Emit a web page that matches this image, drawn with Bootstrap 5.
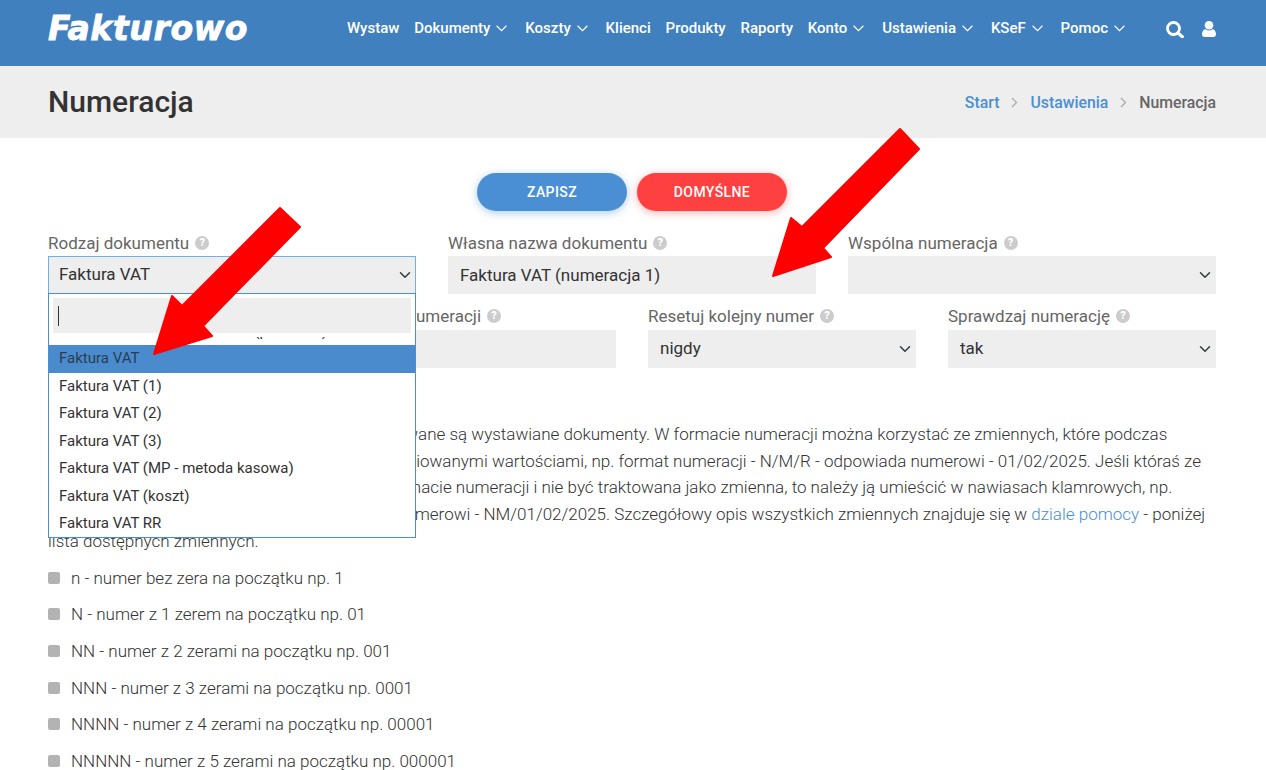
<!DOCTYPE html>
<html lang="pl">
<head>
<meta charset="utf-8">
<title>Numeracja</title>
<link rel="stylesheet" href="https://cdn.jsdelivr.net/npm/bootstrap@5.3.0/dist/css/bootstrap.min.css">
<style>
html,body{height:770px;overflow:hidden}
body{font-family:Roboto,"Liberation Sans",sans-serif;font-size:17px;color:#333;background:#fff;position:relative}
.top-nav{--bs-navbar-nav-link-padding-x:7.4px;background:#4080bf;height:66px;padding:0 50px 0 48px;align-items:flex-start;flex-wrap:nowrap}
.top-logo{font-family:"DejaVu Sans",sans-serif;font-weight:700;font-style:italic;font-size:33px;line-height:44px;color:#fff;letter-spacing:.65px;-webkit-text-stroke:.8px #fff;padding:7px 0 0;margin:0}
.top-logo:hover{color:#fff}
.top-menu{margin-top:17px;align-items:center}
.top-menu .nav-link{color:#fff;font-weight:500;font-size:15px;line-height:22px;padding-top:0;padding-bottom:0;display:flex;align-items:center;white-space:nowrap}
.top-menu .nav-link .chev{margin-left:6px;margin-right:3.1px}
.top-icons{margin-left:30.5px;gap:18px;margin-top:2px}
.band{background:#eee;height:72px;padding:0 50px 0 48px}
.band h1{font-size:30px;font-weight:500;margin:0;color:#333}
.crumbs{font-weight:500;font-size:15.8px;margin:0;padding-top:1px}
.crumbs a{color:#4a8fd4;text-decoration:none}
.crumbs .active{color:#666}
.crumb-sep{width:31px;display:flex;justify-content:center}
.page{padding:35px 50px 0 48px}
.btn-row{column-gap:10px}
.btn-pill{width:150px;height:38px;border-radius:19px;border:0;color:#fff;font-size:14px;font-weight:500;letter-spacing:.4px;line-height:38px;padding:0}
.btn-blue{background:#4a8fd4;box-shadow:0 2px 8px rgba(74,143,212,.45)}
.btn-red{background:#ff4040;box-shadow:0 2px 8px rgba(255,64,64,.4)}
.btn-blue:hover,.btn-red:hover{color:#fff}
.form-rows{--bs-gutter-x:32px;margin-top:21px}
.form-rows label{display:flex;align-items:center;gap:6px;color:#666;font-size:17px;line-height:22px;height:24px;padding-bottom:2px;margin:0;white-space:nowrap}
.hint{width:14px;height:14px;border-radius:50%;background:#ccc;color:#fff;font-size:11px;font-weight:900;line-height:14px;text-align:center;display:inline-block}
.fld{background-color:#eee;border:0;border-radius:0;height:38px;font-size:17px;color:#333;padding:0 12px;box-shadow:none}
.form-select.fld{background-position:right 3px center}
.fld:focus{background-color:#eee;box-shadow:none}
.row2{margin-top:12px;height:62px}
.row2 .fld{height:37.5px}
.form-rows.row2 label{padding-bottom:4px}
.form-select.fld-open{border:1px solid #6fb0e6;padding-left:10px;background-position:right 2px center}
.copy{font-weight:300;font-size:17px;line-height:26.67px;margin:53px 0 0;color:#333;white-space:nowrap}
.copy a{color:#4a8fd4;text-decoration:none}
.vars{list-style:none;padding:0;margin:5.3px 0 0;font-weight:300;font-size:17px}
.vars li{height:36.67px;line-height:36.67px;padding-left:23px;position:relative;white-space:nowrap}
.vars li::before{content:"";position:absolute;left:0;top:12px;width:12px;height:12px;background:#b3b3b3;border-radius:2px}
.drop{position:absolute;left:48px;top:293px;width:368px;height:245px;background:#fff;border:1px solid #4a8fd4;overflow:hidden;font-size:15px}
.drop-search{height:43px;padding:4px}
.search-box{background:#eee;height:35px;padding-left:5px;display:flex;align-items:center}
.caret-bar{width:1px;height:20px;background:#333}
.drop-list{height:201px;overflow:hidden;list-style:none;margin:0;padding:0}
.drop-list li{height:27.5px;line-height:26px;padding-left:10px;white-space:nowrap;color:#333}
.drop-list .clipped{margin-top:-19.5px}
.drop-list .hl{background:#4a8bcd;color:#2b3d50}
.arrows{position:absolute;left:0;top:0;pointer-events:none}
</style>
</head>
<body>
<nav class="navbar navbar-expand top-nav">
  <a class="navbar-brand top-logo" href="#">Fakturowo</a>
  <ul class="navbar-nav ms-auto top-menu">
    <li class="nav-item"><a class="nav-link" href="#">Wystaw</a></li>
    <li class="nav-item"><a class="nav-link" href="#">Dokumenty<svg class="chev" width="11" height="7" viewBox="0 0 11 7"><path d="M.6.8 5.500 5.600 10.400.8" fill="none" stroke="#fff" stroke-width="1.200"/></svg></a></li>
    <li class="nav-item"><a class="nav-link" href="#">Koszty<svg class="chev" width="11" height="7" viewBox="0 0 11 7"><path d="M.6.8 5.500 5.600 10.400.8" fill="none" stroke="#fff" stroke-width="1.200"/></svg></a></li>
    <li class="nav-item"><a class="nav-link" href="#">Klienci</a></li>
    <li class="nav-item"><a class="nav-link" href="#">Produkty</a></li>
    <li class="nav-item"><a class="nav-link" href="#">Raporty</a></li>
    <li class="nav-item"><a class="nav-link" href="#">Konto<svg class="chev" width="11" height="7" viewBox="0 0 11 7"><path d="M.6.8 5.500 5.600 10.400.8" fill="none" stroke="#fff" stroke-width="1.200"/></svg></a></li>
    <li class="nav-item"><a class="nav-link" href="#">Ustawienia<svg class="chev" width="11" height="7" viewBox="0 0 11 7"><path d="M.6.8 5.500 5.600 10.400.8" fill="none" stroke="#fff" stroke-width="1.200"/></svg></a></li>
    <li class="nav-item"><a class="nav-link" href="#">KSeF<svg class="chev" width="11" height="7" viewBox="0 0 11 7"><path d="M.6.8 5.500 5.600 10.400.8" fill="none" stroke="#fff" stroke-width="1.200"/></svg></a></li>
    <li class="nav-item"><a class="nav-link" href="#">Pomoc<svg class="chev" width="11" height="7" viewBox="0 0 11 7"><path d="M.6.8 5.500 5.600 10.400.8" fill="none" stroke="#fff" stroke-width="1.200"/></svg></a></li>
    <li class="nav-item d-flex align-items-center top-icons">
      <svg width="18" height="17" viewBox="0 0 18 17"><circle cx="7.500" cy="7.500" r="6" fill="none" stroke="#fff" stroke-width="2.800"/><path d="M12 12l4.300 3.700" stroke="#fff" stroke-width="3.200" stroke-linecap="round"/></svg>
      <svg width="14" height="16" viewBox="0 0 14 16"><circle cx="7" cy="4.300" r="4.300" fill="#fff"/><path d="M0 13.300C0 10 1.800 8.200 3.600 8.200c1 .8 2.100 1.200 3.400 1.200s2.400-.4 3.400-1.200C12.200 8.200 14 10 14 13.300 14 15 13 16 11.500 16h-9C1 16 0 15 0 13.300z" fill="#fff"/></svg>
    </li>
  </ul>
</nav>

<header class="band d-flex align-items-center justify-content-between">
  <h1>Numeracja</h1>
  <div class="d-flex align-items-center crumbs">
    <a href="#">Start</a>
    <span class="crumb-sep"><svg width="7" height="11" viewBox="0 0 7 11"><path d="M1 1l4.500 4.500L1 10" fill="none" stroke="#aaa" stroke-width="1.300"/></svg></span>
    <a href="#">Ustawienia</a>
    <span class="crumb-sep"><svg width="7" height="11" viewBox="0 0 7 11"><path d="M1 1l4.500 4.500L1 10" fill="none" stroke="#aaa" stroke-width="1.300"/></svg></span>
    <span class="active">Numeracja</span>
  </div>
</header>

<main class="page">
  <div class="d-flex justify-content-center btn-row">
    <button type="button" class="btn btn-pill btn-blue">ZAPISZ</button>
    <button type="button" class="btn btn-pill btn-red">DOMYŚLNE</button>
  </div>

  <div class="row form-rows">
    <div class="col-4">
      <label>Rodzaj dokumentu <span class="hint">?</span></label>
      <select class="form-select fld fld-open"><option>Faktura VAT</option></select>
    </div>
    <div class="col-4">
      <label>Własna nazwa dokumentu <span class="hint">?</span></label>
      <input class="form-control fld" value="Faktura VAT (numeracja 1)">
    </div>
    <div class="col-4">
      <label>Wspólna numeracja <span class="hint">?</span></label>
      <select class="form-select fld"><option></option></select>
    </div>
  </div>

  <div class="row form-rows row2">
    <div class="col-3">
      <label>Kolejny numer <span class="hint">?</span></label>
      <input class="form-control fld" value="1">
    </div>
    <div class="col-3">
      <label>Format numeracji <span class="hint">?</span></label>
      <input class="form-control fld" value="">
    </div>
    <div class="col-3">
      <label>Resetuj kolejny numer <span class="hint">?</span></label>
      <select class="form-select fld"><option>nigdy</option></select>
    </div>
    <div class="col-3">
      <label>Sprawdzaj numerację <span class="hint">?</span></label>
      <select class="form-select fld"><option>tak</option></select>
    </div>
  </div>

  <p class="copy">Format numeracji określa w jaki sposób numerowane są wystawiane dokumenty. W formacie numeracji można korzystać ze zmiennych, które podczas<br>
  wystawiania dokumentów zastępowane są zdefiniowanymi wartościami, np. format numeracji - N/M/R - odpowiada numerowi - 01/02/2025. Jeśli któraś ze<br>
  zmiennych ma być wyświetlona dosłownie w formacie numeracji i nie być traktowana jako zmienna, to należy ją umieścić w nawiasach klamrowych, np.<br>
  format numeracji - {N}{M}/N/M/R - odpowiada numerowi - NM/01/02/2025. Szczegółowy opis wszystkich zmiennych znajduje się w <a href="#">dziale pomocy</a> - poniżej<br>
  lista dostępnych zmiennych.</p>

  <ul class="vars">
    <li>n - numer bez zera na początku np. 1</li>
    <li>N - numer z 1 zerem na początku np. 01</li>
    <li>NN - numer z 2 zerami na początku np. 001</li>
    <li>NNN - numer z 3 zerami na początku np. 0001</li>
    <li>NNNN - numer z 4 zerami na początku np. 00001</li>
    <li>NNNNN - numer z 5 zerami na początku np. 000001</li>
  </ul>
</main>

<div class="drop">
  <div class="drop-search"><div class="search-box"><span class="caret-bar"></span></div></div>
  <ul class="drop-list">
    <li class="clipped">Faktura końcowa, rozliczenie (proforma)</li>
    <li class="hl">Faktura VAT</li>
    <li>Faktura VAT (1)</li>
    <li>Faktura VAT (2)</li>
    <li>Faktura VAT (3)</li>
    <li>Faktura VAT (MP - metoda kasowa)</li>
    <li>Faktura VAT (koszt)</li>
    <li>Faktura VAT RR</li>
  </ul>
</div>

<svg class="arrows" width="1266" height="770" viewBox="0 0 1266 770">
  <g fill="#f00" stroke="#f00" stroke-width="2" stroke-linejoin="round">
    <polygon points="154,354 172,296 182,306 280,208 300,227 203,326 212,336"/>
    <polygon points="773,276 791,218 802,227 900,129 919,149 823,248 831,257"/>
  </g>
</svg>
</body>
</html>
